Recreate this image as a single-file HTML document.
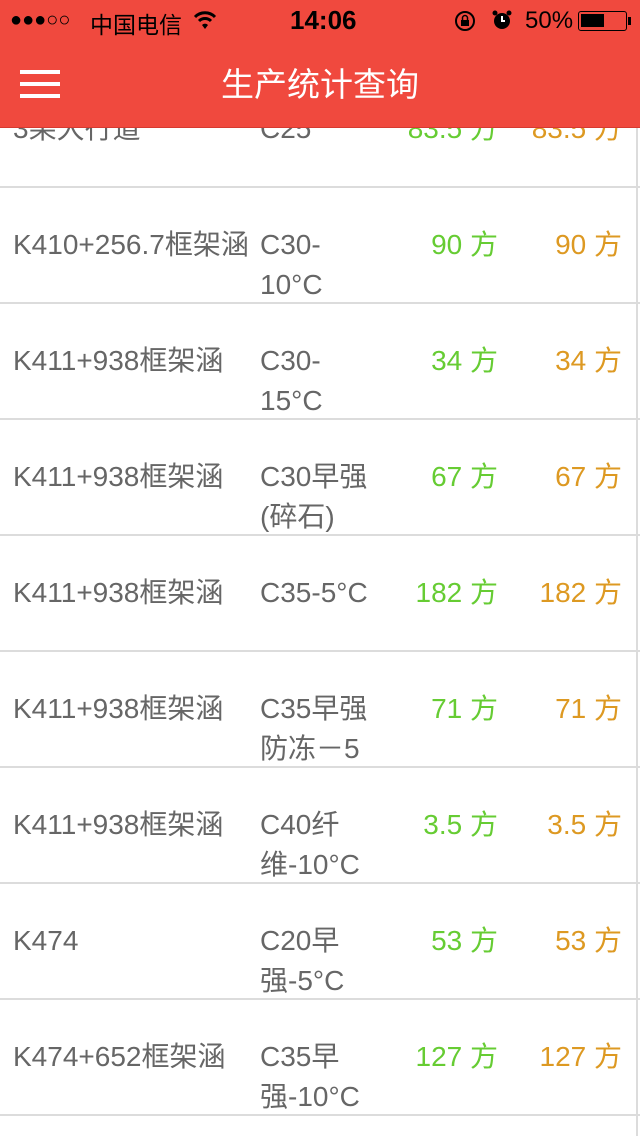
<!DOCTYPE html>
<html><head><meta charset="utf-8"><style>
*{margin:0;padding:0;box-sizing:border-box}
body{width:640px;height:1136px;overflow:hidden;background:#fff;position:relative;font-family:"Liberation Sans","Noto Sans CJK SC",sans-serif}
.list{position:absolute;left:0;top:72px;width:640px}
.row{position:relative;height:116px;border-bottom:2px solid #dcdcdc;color:#666;font-size:28px;line-height:40px}
.c1{position:absolute;left:13px;top:37px;white-space:nowrap}
.c2{position:absolute;left:260px;top:37px;width:132px}
.c3{position:absolute;right:142px;top:37px;color:#66cc33;white-space:nowrap}
.c4{position:absolute;right:18px;top:37px;color:#dd9922;white-space:nowrap}
.vl{position:absolute;left:636px;top:128px;width:2px;height:1008px;background:#dcdcdc}
.hdr{position:absolute;left:0;top:0;width:640px;height:128px;background:#f0493e;border-bottom:1px solid #d63a30}
.sb{position:absolute;top:5px;font-size:25px;color:#000;white-space:nowrap}
</style></head><body>
<div class="list">
<div class="row"><span class="c1">3果大行道</span><span class="c2">C25</span><span class="c3">83.5 方</span><span class="c4">83.5 方</span></div>
<div class="row"><span class="c1">K410+256.7框架涵</span><span class="c2">C30-<br>10°C</span><span class="c3">90 方</span><span class="c4">90 方</span></div>
<div class="row"><span class="c1">K411+938框架涵</span><span class="c2">C30-<br>15°C</span><span class="c3">34 方</span><span class="c4">34 方</span></div>
<div class="row"><span class="c1">K411+938框架涵</span><span class="c2">C30早强<br>(碎石)</span><span class="c3">67 方</span><span class="c4">67 方</span></div>
<div class="row"><span class="c1">K411+938框架涵</span><span class="c2" style="width:160px">C35-5°C</span><span class="c3">182 方</span><span class="c4">182 方</span></div>
<div class="row"><span class="c1">K411+938框架涵</span><span class="c2">C35早强<br>防冻－5</span><span class="c3">71 方</span><span class="c4">71 方</span></div>
<div class="row"><span class="c1">K411+938框架涵</span><span class="c2">C40纤<br>维-10°C</span><span class="c3">3.5 方</span><span class="c4">3.5 方</span></div>
<div class="row"><span class="c1">K474</span><span class="c2">C20早<br>强-5°C</span><span class="c3">53 方</span><span class="c4">53 方</span></div>
<div class="row"><span class="c1">K474+652框架涵</span><span class="c2">C35早<br>强-10°C</span><span class="c3">127 方</span><span class="c4">127 方</span></div>
</div>
<div class="vl"></div>
<div class="hdr">
<div class="sb" style="left:10px;font-size:20px;top:9px">●●●○○</div>
<div class="sb" style="left:90px;font-size:23px;top:6px">中国电信</div>
<svg style="position:absolute;left:193px;top:10px" width="24" height="20" viewBox="0 0 24 20"><path d="M2 7a14 14 0 0 1 20 0" stroke="#000" stroke-width="3" fill="none"/><path d="M6 11a8.5 8.5 0 0 1 12 0" stroke="#000" stroke-width="3" fill="none"/><path d="M9 15l3 4 3-4a4 4 0 0 0-6 0z" fill="#000"/></svg>
<div class="sb" style="left:290px;font-weight:bold;font-size:26px">14:06</div>
<svg style="position:absolute;left:454px;top:10px" width="24" height="22" viewBox="0 0 24 22"><circle cx="11" cy="11" r="9" stroke="#000" stroke-width="2" fill="none"/><rect x="7" y="10" width="8" height="6" fill="#000"/><path d="M8.5 10V8a2.5 2.5 0 0 1 5 0v2" stroke="#000" stroke-width="1.5" fill="none"/></svg>
<svg style="position:absolute;left:491px;top:9px" width="22" height="22" viewBox="0 0 22 22"><circle cx="11" cy="12" r="8" fill="#000"/><path d="M11 7v5h3" stroke="#fff" stroke-width="2" fill="none"/><circle cx="4" cy="4" r="2.5" fill="#000"/><circle cx="18" cy="4" r="2.5" fill="#000"/></svg>
<div class="sb" style="left:525px;top:7px;font-size:24px">50%</div>
<div style="position:absolute;left:578px;top:11px;width:49px;height:20px;border:1.5px solid #000;border-radius:3px"><div style="margin:2px;width:23px;height:13px;background:#000"></div></div>
<div style="position:absolute;left:628px;top:17px;width:3px;height:8px;background:#000"></div>
<div style="position:absolute;left:20px;top:70px;width:40px;height:4px;background:#fff"></div>
<div style="position:absolute;left:20px;top:82px;width:40px;height:4px;background:#fff"></div>
<div style="position:absolute;left:20px;top:94px;width:40px;height:4px;background:#fff"></div>
<div style="position:absolute;left:0;width:640px;top:65px;text-align:center;color:#fff;font-size:33px;line-height:40px">生产统计查询</div>
</div>
</body></html>
